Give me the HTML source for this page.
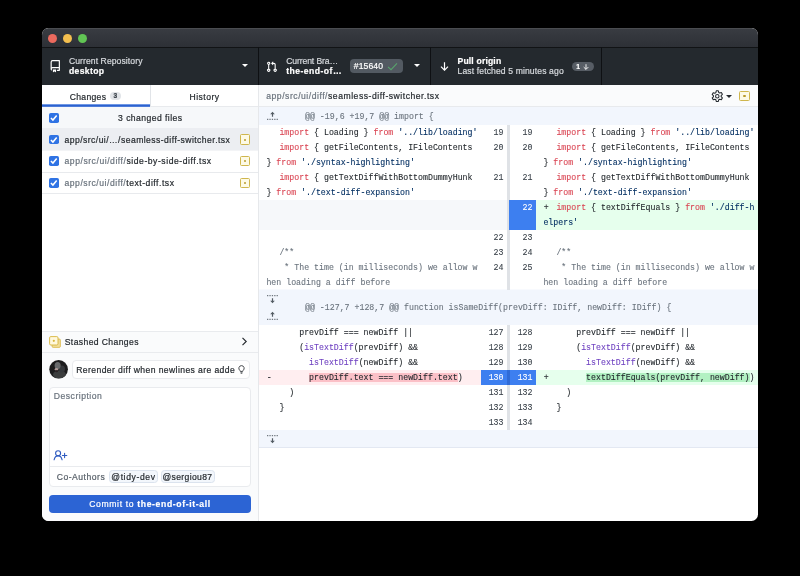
<!DOCTYPE html>
<html lang="en"><head>
<meta charset="utf-8">
<title>GitHub Desktop</title>
<style>
*{box-sizing:border-box;margin:0;padding:0}
html,body{width:800px;height:576px;background:#000;overflow:hidden}
body{font-family:"Liberation Sans",sans-serif;font-size:8.6px;color:#24292e;position:relative}
.win{position:absolute;left:42px;top:28px;width:716px;height:493px;background:#fff;border-radius:6.5px;overflow:hidden}
.pg{will-change:transform;position:absolute;left:-42px;top:-28px;width:800px;height:576px}
.r{position:absolute}
.tx{-webkit-text-stroke:0.2px;position:absolute;white-space:nowrap;line-height:10px}
.mono{-webkit-text-stroke:0.1px;position:absolute;white-space:pre;font-family:"Liberation Mono",monospace;font-size:8.25px;line-height:15px}
.cl{-webkit-text-stroke:0.1px;position:absolute;font-family:"Liberation Mono",monospace;font-size:8.25px;line-height:15px;white-space:pre;padding-left:7.4px;color:#24292e;overflow:hidden}
.mk{display:inline-block;width:13px;padding-left:0.4px}
.ln{-webkit-text-stroke:0.1px;position:absolute;width:26px;font-family:"Liberation Mono",monospace;font-size:8.25px;line-height:15px;text-align:right;padding-right:3.5px;color:#3a424a}
.ln.sel{background:#3d7ff0;color:#fff}
.ln.selr{margin-left:-1.5px;width:27.5px}
.k{color:#da4553}.s{color:#032f62}.f{color:#6f42c1}.c{color:#6a737d}
.hr{background:#fbc0c7}.hg{background:#b2f1c2}
</style>
</head>
<body>
<div class="win"><div class="pg">
<div class="r" style="left:42px;top:28px;width:716px;height:19px;background:linear-gradient(#393c42,#2d3036);"></div>
<div class="r" style="left:42px;top:28px;width:716px;height:1px;background:#4a4c50;"></div>
<div class="r" style="left:47.65px;top:34px;width:9.2px;height:9.2px;background:#ec6a5e;border-radius:50%"></div>
<div class="r" style="left:62.800000000000004px;top:34px;width:9.2px;height:9.2px;background:#f4bf4f;border-radius:50%"></div>
<div class="r" style="left:77.5px;top:34px;width:9.2px;height:9.2px;background:#61c554;border-radius:50%"></div>
<div class="r" style="left:42px;top:47px;width:716px;height:38px;background:#24292e;"></div>
<div class="r" style="left:42px;top:46.5px;width:716px;height:1px;background:#111315;"></div>
<div class="r" style="left:258px;top:47px;width:1px;height:38px;background:#0e1013;"></div>
<div class="r" style="left:430px;top:47px;width:1px;height:38px;background:#0e1013;"></div>
<div class="r" style="left:601px;top:47px;width:1px;height:38px;background:#0e1013;"></div>
<svg class="r" style="left:49px;top:60px" width="12.5" height="12.5" viewBox="0 0 16 16"><path fill="#fff" d="M2 2.500A2.500 2.500 0 0 1 4.500 0h8.750a.750.750 0 0 1 .750.750v12.500a.750.750 0 0 1-.750.750h-2.500a.750.750 0 0 1 0-1.500h1.750v-2h-8a1 1 0 0 0-.714 1.700.750.750 0 1 1-1.072 1.050A2.495 2.495 0 0 1 2 11.500Zm10.500-1h-8a1 1 0 0 0-1 1v6.708A2.486 2.486 0 0 1 4.500 9h8ZM5 12.250a.250.250 0 0 1 .250-.250h3.500a.250.250 0 0 1 .250.250v3.250a.250.250 0 0 1-.400.200l-1.450-1.087a.249.249 0 0 0-.300 0L5.400 15.700a.250.250 0 0 1-.400-.200Z"></path></svg>
<span class="tx" style="left: 68.9px; top: 55.62px; font-size: 8.6px; color: rgb(215, 218, 222); letter-spacing: 0.084px;">Current Repository</span>
<span class="tx" style="left: 68.9px; top: 65.92px; font-size: 8.6px; color: rgb(255, 255, 255); font-weight: bold; letter-spacing: 0.361px;">desktop</span>
<div class="r" style="left:242px;top:64.3px;width:0;height:0;border-left:3.0px solid transparent;border-right:3.0px solid transparent;border-top:3.5px solid #fff"></div>
<svg class="r" style="left:266px;top:60.5px" width="11.5" height="11.5" viewBox="0 0 16 16"><path fill="#fff" d="M1.500 3.250a2.250 2.250 0 1 1 3 2.122v5.256a2.251 2.251 0 1 1-1.500 0V5.372A2.250 2.250 0 0 1 1.500 3.250Zm5.677-.177L9.573.677A.250.250 0 0 1 10 .854V2.500h1A2.500 2.500 0 0 1 13.500 5v5.628a2.251 2.251 0 1 1-1.500 0V5a1 1 0 0 0-1-1h-1v1.646a.250.250 0 0 1-.427.177L7.177 3.427a.250.250 0 0 1 0-.354ZM3.750 2.500a.750.750 0 1 0 0 1.500.750.750 0 0 0 0-1.500Zm0 9.500a.750.750 0 1 0 0 1.500.750.750 0 0 0 0-1.500Zm8.250.750a.750.750 0 1 0 1.500 0 .750.750 0 0 0-1.500 0Z"></path></svg>
<span class="tx" style="left: 286.25px; top: 55.62px; font-size: 8.6px; color: rgb(215, 218, 222); letter-spacing: -0.11px;">Current Bra…</span>
<span class="tx" style="left: 286.25px; top: 65.92px; font-size: 8.6px; color: rgb(255, 255, 255); font-weight: bold; letter-spacing: 0.466px;">the-end-of…</span>
<div class="r" style="left:350px;top:59.3px;width:53px;height:13.7px;background:#535a62;border-radius:4px"></div>
<span class="tx" style="left: 353.75px; top: 61.22px; font-size: 8.6px; color: rgb(255, 255, 255); letter-spacing: 0.102px;">#15640</span>
<svg class="r" style="left:387px;top:61.5px" width="11" height="9" viewBox="0 0 11 9"><path d="M1 4.800 4 7.700 10 1.300" fill="none" stroke="#58a46c" stroke-width="1.050"></path></svg>
<div class="r" style="left:413.8px;top:64.3px;width:0;height:0;border-left:3.0px solid transparent;border-right:3.0px solid transparent;border-top:3.5px solid #fff"></div>
<svg class="r" style="left:440px;top:61.5px" width="9" height="9" viewBox="0 0 9 9"><path d="M4.500 0.300V8M1 4.700 4.500 8.200 8 4.700" fill="none" stroke="#fff" stroke-width="1.200"></path></svg>
<span class="tx" style="left: 457.5px; top: 55.62px; font-size: 8.6px; color: rgb(255, 255, 255); font-weight: bold; letter-spacing: 0.165px;">Pull origin</span>
<span class="tx" style="left: 457.5px; top: 65.92px; font-size: 8.6px; color: rgb(215, 218, 222); letter-spacing: 0.119px;">Last fetched 5 minutes ago</span>
<div class="r" style="left:572px;top:61.8px;width:22.3px;height:9.5px;background:#575d65;border-radius:5px"></div>
<span class="tx" style="left:576.30px;top:61.74px;font-size:6.8px;color:#fff;font-weight:bold;">1</span>
<svg class="r" style="left:582.8px;top:63.7px" width="6" height="6" viewBox="0 0 6 6"><path d="M3 0.200V5.300M0.700 3.100 3 5.400 5.300 3.100" fill="none" stroke="#fff" stroke-width="0.900"></path></svg>
<div class="r" style="left:42px;top:85px;width:216px;height:436px;background:#fff;"></div>
<div class="r" style="left:258px;top:85px;width:1px;height:436px;background:#e6e8eb;"></div>
<div class="r" style="left:42px;top:106px;width:216px;height:1px;background:#e8eaed;"></div>
<div class="r" style="left:150px;top:85px;width:1px;height:21px;background:#e1e4e8;"></div>
<div class="r" style="left:42px;top:104px;width:108px;height:1px;background:#6f97e4;"></div>
<div class="r" style="left:42px;top:105px;width:108px;height:1px;background:#2b62cf;"></div>
<div class="r" style="left:42px;top:106px;width:108px;height:1px;background:#4d7bd8;"></div>
<span class="tx" style="left: 69.75px; top: 91.62px; font-size: 8.6px; color: rgb(36, 41, 46); letter-spacing: 0.307px;">Changes</span>
<div class="r" style="left:110.2px;top:92.4px;width:10.6px;height:7.8px;background:#e1e4e8;border-radius:4px"></div>
<span class="tx" style="left:113.60px;top:91.31px;font-size:6.6px;color:#3a424a;font-weight:bold;">3</span>
<span class="tx" style="left: 189.5px; top: 91.62px; font-size: 8.6px; color: rgb(36, 41, 46); letter-spacing: 0.462px;">History</span>
<div class="r" style="left:42px;top:107px;width:216px;height:21px;background:#f6f8fa;"></div>
<div class="r" style="left:42px;top:128px;width:216px;height:0px;background:#e1e4e8;"></div>
<div class="r" style="left:49.2px;top:113.2px;width:9.6px;height:9.6px;background:#2f73e4;border-radius:1.800px"></div>
<svg class="r" style="left:49.2px;top:113.2px" width="9.6" height="9.6" viewBox="0 0 10 10"><path d="M2 5.200 4.100 7.300 8 2.700" fill="none" stroke="#fff" stroke-width="1.600"></path></svg>
<span class="tx" style="left: 118.1px; top: 113.32px; font-size: 8.6px; color: rgb(36, 41, 46); letter-spacing: 0.434px;">3 changed files</span>
<div class="r" style="left:42px;top:150px;width:216px;height:1px;background:#f3f4f6;"></div>
<div class="r" style="left:42px;top:171.5px;width:216px;height:1px;background:#e8eaed;"></div>
<div class="r" style="left:42px;top:193px;width:216px;height:1px;background:#e8eaed;"></div>
<div class="r" style="left:42px;top:128px;width:216px;height:22px;background:#eceef2;"></div>
<div class="r" style="left:49.2px;top:134.8px;width:9.6px;height:9.6px;background:#2f73e4;border-radius:1.800px"></div>
<svg class="r" style="left:49.2px;top:134.8px" width="9.6" height="9.6" viewBox="0 0 10 10"><path d="M2 5.200 4.100 7.300 8 2.700" fill="none" stroke="#fff" stroke-width="1.600"></path></svg>
<span class="tx" style="left: 64.5px; top: 134.57px; font-size: 8.6px; color: rgb(36, 41, 46); letter-spacing: 0.447px;">app/src/ui/…/seamless-diff-switcher.tsx</span>
<div class="r" style="left:239.6px;top:134.3px;width:10.600px;height:10.600px;border:1px solid #cfb64d;border-radius:1.500px;background:#fdfae6"></div>
<div class="r" style="left:243.79999999999998px;top:138.5px;width:2.2px;height:2.2px;background:#b99a2c;border-radius:50%"></div>
<div class="r" style="left:49.2px;top:156.4px;width:9.6px;height:9.6px;background:#2f73e4;border-radius:1.800px"></div>
<svg class="r" style="left:49.2px;top:156.4px" width="9.6" height="9.6" viewBox="0 0 10 10"><path d="M2 5.200 4.100 7.300 8 2.700" fill="none" stroke="#fff" stroke-width="1.600"></path></svg>
<span class="tx" style="left: 64.5px; top: 156.17px; font-size: 8.6px; color: rgb(36, 41, 46); letter-spacing: 0.539px;"><span style="color:#6a737d">app/src/ui/diff/</span>side-by-side-diff.tsx</span>
<div class="r" style="left:239.6px;top:155.9px;width:10.600px;height:10.600px;border:1px solid #cfb64d;border-radius:1.500px;background:#fdfae6"></div>
<div class="r" style="left:243.79999999999998px;top:160.1px;width:2.2px;height:2.2px;background:#b99a2c;border-radius:50%"></div>
<div class="r" style="left:49.2px;top:178.0px;width:9.6px;height:9.6px;background:#2f73e4;border-radius:1.800px"></div>
<svg class="r" style="left:49.2px;top:178.0px" width="9.6" height="9.6" viewBox="0 0 10 10"><path d="M2 5.200 4.100 7.300 8 2.700" fill="none" stroke="#fff" stroke-width="1.600"></path></svg>
<span class="tx" style="left: 64.5px; top: 177.77px; font-size: 8.6px; color: rgb(36, 41, 46); letter-spacing: 0.525px;"><span style="color:#6a737d">app/src/ui/diff/</span>text-diff.tsx</span>
<div class="r" style="left:239.6px;top:177.5px;width:10.600px;height:10.600px;border:1px solid #cfb64d;border-radius:1.500px;background:#fdfae6"></div>
<div class="r" style="left:243.79999999999998px;top:181.7px;width:2.2px;height:2.2px;background:#b99a2c;border-radius:50%"></div>
<div class="r" style="left:42px;top:331px;width:216px;height:190px;background:#fafbfc;"></div>
<div class="r" style="left:42px;top:331px;width:216px;height:1px;background:#e9ebee;"></div>
<div class="r" style="left:42px;top:352px;width:216px;height:1px;background:#e9ebee;"></div>
<svg class="r" style="left:48.5px;top:336px" width="12" height="12" viewBox="0 0 12 12"><rect x="3" y="3" width="8.400" height="8.400" rx="1.200" fill="#f1dd9a" stroke="#dbb94a" stroke-width="0.800"></rect><rect x="0.600" y="0.600" width="8.400" height="8.400" rx="1.200" fill="#fff8dc" stroke="#d6b43a" stroke-width="0.900"></rect><circle cx="4.800" cy="4.800" r="1.100" fill="#d6b43a"></circle></svg>
<span class="tx" style="left: 64.75px; top: 337.22px; font-size: 8.6px; color: rgb(36, 41, 46); letter-spacing: 0.384px;">Stashed Changes</span>
<svg class="r" style="left:241px;top:337.4px" width="7" height="9" viewBox="0 0 7 9"><path d="M1.500 0.800 5.200 4.500 1.500 8.200" fill="none" stroke="#24292e" stroke-width="1.150"></path></svg>
<svg class="r" style="left:49px;top:360px" width="19" height="19" viewBox="0 0 19 19"><defs><clipPath id="avc"><circle cx="9.600" cy="9.300" r="9.300"></circle></clipPath><filter id="avb" x="-50%" y="-50%" width="200%" height="200%"><feGaussianBlur stdDeviation="0.700"></feGaussianBlur></filter></defs><g clip-path="url(#avc)"><rect width="19" height="19" fill="#1c1c1d"></rect><g filter="url(#avb)"><ellipse cx="10.500" cy="14.500" rx="6.500" ry="4" fill="#3b3d3e"></ellipse><ellipse cx="13" cy="9" rx="3" ry="3.500" fill="#35373a"></ellipse><ellipse cx="8.600" cy="5.600" rx="3" ry="3.600" fill="#686b6c"></ellipse><ellipse cx="7.400" cy="9.200" rx="1.700" ry="1.200" fill="#b09a98"></ellipse><ellipse cx="7.600" cy="11.200" rx="1.500" ry="1" fill="#2a2223"></ellipse></g></g></svg>
<div class="r" style="left:72px;top:360.400px;width:178px;height:18.200px;border:1px solid #e9ebee;border-radius:4px;background:#fff"></div>
<span class="tx" style="left: 76.25px; top: 365.12px; font-size: 8.6px; color: rgb(36, 41, 46); letter-spacing: 0.397px;">Rerender diff when newlines are adde</span>
<svg class="r" style="left:238.3px;top:364.9px" width="7" height="9.6" viewBox="0 0 8 11"><path d="M4 0.700a3.100 3.100 0 0 0-1.900 5.500c.4.350.6.700.6 1.200h2.600c0-.5.200-.850.600-1.200A3.100 3.100 0 0 0 4 .700ZM2.800 9h2.400M3.300 10.300h1.400" fill="none" stroke="#24292e" stroke-width="0.950"></path></svg>
<div class="r" style="left:49px;top:387.200px;width:201.500px;height:99.800px;border:1px solid #e9ebee;border-radius:4px;background:#fff"></div>
<span class="tx" style="left: 53.8px; top: 391.32px; font-size: 8.6px; color: rgb(106, 115, 125); letter-spacing: 0.505px;">Description</span>
<svg class="r" style="left:52px;top:449px" width="16" height="13" viewBox="52 449 16 13"><g fill="none" stroke="#2f5bc0" stroke-width="1.100" stroke-linecap="round"><circle cx="58.100" cy="453.300" r="2.500"></circle><path d="M54.100 459.800c.5-2.300 1.900-3.900 4-3.900s3.500 1.600 4 3.900"></path><path d="M64.600 453.400v4.200M62.400 455.500h4.400"></path></g></svg>
<div class="r" style="left:50px;top:466px;width:200px;height:1px;background:#e9ebee;"></div>
<span class="tx" style="left: 56.7px; top: 471.82px; font-size: 8.6px; color: rgb(88, 96, 105); letter-spacing: 0.509px;">Co-Authors</span>
<div class="r" style="left:109.300px;top:470px;width:48.300px;height:13px;border:1px solid #dbe3ee;border-radius:3.500px;background:#f3f7fc"></div>
<span class="tx" style="left: 111.3px; top: 471.82px; font-size: 8.6px; color: rgb(36, 41, 46); letter-spacing: 0.608px;">@tidy-dev</span>
<div class="r" style="left:160.500px;top:470px;width:54.300px;height:13px;border:1px solid #dbe3ee;border-radius:3.500px;background:#f3f7fc"></div>
<span class="tx" style="left: 162.5px; top: 471.82px; font-size: 8.6px; color: rgb(36, 41, 46); letter-spacing: 0.34px;">@sergiou87</span>
<div class="r" style="left:49px;top:495px;width:201.5px;height:18px;background:#2c64d4;border-radius:4px"></div>
<span class="tx" style="left: 89.2px; top: 498.82px; font-size: 8.6px; color: rgb(255, 255, 255); letter-spacing: 0.649px;">Commit to <b>the-end-of-it-all</b></span>
<div class="r" style="left:259px;top:85px;width:499px;height:21.5px;background:#fafbfc;"></div>
<div class="r" style="left:259px;top:106px;width:499px;height:1px;background:#e8eaed;"></div>
<span class="tx" style="left: 266.25px; top: 91.27px; font-size: 8.6px; color: rgb(36, 41, 46); letter-spacing: 0.528px;"><span style="color:#6a737d">app/src/ui/diff/</span>seamless-diff-switcher.tsx</span>
<svg class="r" style="left:711px;top:89.8px" width="12.6" height="12.6" viewBox="0 0 16 16"><path fill="none" stroke="#24292e" stroke-width="1.350" stroke-linejoin="round" d="M6.700 1h2.600l.5 2.100 1.300.75 2.050-.6 1.300 2.250-1.550 1.500v1.500l1.550 1.500-1.300 2.250-2.050-.6-1.300.75-.5 2.100H6.700l-.5-2.100-1.300-.75-2.050.6-1.300-2.250L3.100 8.750v-1.500L1.550 5.750l1.300-2.250 2.050.6 1.300-.75Z"></path><circle cx="8" cy="8" r="2.200" fill="none" stroke="#24292e" stroke-width="1.350"></circle></svg>
<div class="r" style="left:726.4px;top:94.8px;width:0;height:0;border-left:3.0px solid transparent;border-right:3.0px solid transparent;border-top:3.2px solid #24292e"></div>
<div class="r" style="left:739.2px;top:90.7px;width:10.600px;height:10.600px;border:1px solid #cfb64d;border-radius:1.500px;background:#fdfae6"></div>
<div class="r" style="left:743.4000000000001px;top:94.9px;width:2.2px;height:2.2px;background:#b99a2c;border-radius:50%"></div>
<div class="r" style="left:259px;top:107px;width:499px;height:18px;background:#f2f6fd;"></div>
<span class="mono" style="left:305px;top:108.5px;color:#6a737d">@@ -19,6 +19,7 @@ import {</span>
<svg class="r" style="left:266.5px;top:111.2px" width="11" height="9" viewBox="0 0 11 9"><path d="M5.500 0.800 7.800 3.300H6.100V5.700H4.900V3.300H3.200Z" fill="#535b63"></path><path d="M0 8.300h11" stroke="#535b63" stroke-width="1" stroke-dasharray="1.300 1.100"></path></svg>
<div class="r" style="left:259px;top:125px;width:499px;height:0px;background:#e5eefa;"></div>
<div class="r" style="left:259px;top:289px;width:499px;height:1px;background:#f8fafe;"></div>
<div class="r" style="left:259px;top:290px;width:499px;height:35px;background:#f2f6fd;"></div>
<span class="mono" style="left:305px;top:300.0px;color:#6a737d">@@ -127,7 +128,7 @@ function isSameDiff(prevDiff: IDiff, newDiff: IDiff) {</span>
<svg class="r" style="left:266.5px;top:294.5px" width="11" height="9" viewBox="0 0 11 9"><path d="M0 0.700h11" stroke="#535b63" stroke-width="1" stroke-dasharray="1.300 1.100"></path><path d="M5.500 8.200 7.800 5.700H6.100V3.300H4.900V5.700H3.200Z" fill="#535b63"></path></svg>
<svg class="r" style="left:266.5px;top:311px" width="11" height="9" viewBox="0 0 11 9"><path d="M5.500 0.800 7.800 3.300H6.100V5.700H4.900V3.300H3.200Z" fill="#535b63"></path><path d="M0 8.300h11" stroke="#535b63" stroke-width="1" stroke-dasharray="1.300 1.100"></path></svg>
<div class="r" style="left:259px;top:430px;width:499px;height:16.5px;background:#f2f6fd;"></div>
<svg class="r" style="left:266.5px;top:434.5px" width="11" height="9" viewBox="0 0 11 9"><path d="M0 0.700h11" stroke="#535b63" stroke-width="1" stroke-dasharray="1.300 1.100"></path><path d="M5.500 8.200 7.800 5.700H6.100V3.300H4.900V5.700H3.200Z" fill="#535b63"></path></svg>
<div class="r" style="left:259px;top:446.5px;width:499px;height:1px;background:#e3e8f2;"></div>
<div class="r" style="left:507px;top:125px;width:3px;height:165px;background:#dfe2e6;"></div>
<div class="r" style="left:507px;top:325px;width:3px;height:105px;background:#dfe2e6;"></div>
<div class="cl" style="left:259px;top:125px;width:222px;height:15px;"><span class="mk"></span><span class="k">import</span> { Loading } <span class="k">from</span> <span class="s">'../lib/loading'</span></div>
<div class="ln" style="left:481px;top:125px;height:15px;">19</div>
<div class="cl" style="left:536px;top:125px;width:222px;height:15px;"><span class="mk"></span><span class="k">import</span> { Loading } <span class="k">from</span> <span class="s">'../lib/loading'</span></div>
<div class="ln" style="left:510px;top:125px;height:15px;">19</div>
<div class="cl" style="left:259px;top:140px;width:222px;height:15px;"><span class="mk"></span><span class="k">import</span> { getFileContents, IFileContents</div>
<div class="ln" style="left:481px;top:140px;height:15px;">20</div>
<div class="cl" style="left:536px;top:140px;width:222px;height:15px;"><span class="mk"></span><span class="k">import</span> { getFileContents, IFileContents</div>
<div class="ln" style="left:510px;top:140px;height:15px;">20</div>
<div class="cl" style="left:259px;top:155px;width:222px;height:15px;">} <span class="k">from</span> <span class="s">'./syntax-highlighting'</span></div>
<div class="cl" style="left:536px;top:155px;width:222px;height:15px;">} <span class="k">from</span> <span class="s">'./syntax-highlighting'</span></div>
<div class="cl" style="left:259px;top:170px;width:222px;height:15px;"><span class="mk"></span><span class="k">import</span> { getTextDiffWithBottomDummyHunk</div>
<div class="ln" style="left:481px;top:170px;height:15px;">21</div>
<div class="cl" style="left:536px;top:170px;width:222px;height:15px;"><span class="mk"></span><span class="k">import</span> { getTextDiffWithBottomDummyHunk</div>
<div class="ln" style="left:510px;top:170px;height:15px;">21</div>
<div class="cl" style="left:259px;top:185px;width:222px;height:15px;">} <span class="k">from</span> <span class="s">'./text-diff-expansion'</span></div>
<div class="cl" style="left:536px;top:185px;width:222px;height:15px;">} <span class="k">from</span> <span class="s">'./text-diff-expansion'</span></div>
<div class="r" style="left:259px;top:200px;width:248px;height:30px;background:#f6f8fa;"></div>
<div class="cl" style="left:536px;top:200px;width:222px;height:15px;background:#e6ffed;"><span class="mk">+</span><span class="k">import</span> { textDiffEquals } <span class="k">from</span> <span class="s">'./diff-h</span></div>
<div class="ln sel selr" style="left:510px;top:200px;height:30px;">22</div>
<div class="cl" style="left:536px;top:215px;width:222px;height:15px;background:#e6ffed;"><span class="s">elpers'</span></div>
<div class="cl" style="left:259px;top:230px;width:222px;height:15px;"><span class="mk"></span></div>
<div class="ln" style="left:481px;top:230px;height:15px;">22</div>
<div class="cl" style="left:536px;top:230px;width:222px;height:15px;"><span class="mk"></span></div>
<div class="ln" style="left:510px;top:230px;height:15px;">23</div>
<div class="cl" style="left:259px;top:245px;width:222px;height:15px;"><span class="mk"></span><span class="c">/**</span></div>
<div class="ln" style="left:481px;top:245px;height:15px;">23</div>
<div class="cl" style="left:536px;top:245px;width:222px;height:15px;"><span class="mk"></span><span class="c">/**</span></div>
<div class="ln" style="left:510px;top:245px;height:15px;">24</div>
<div class="cl" style="left:259px;top:260px;width:222px;height:15px;"><span class="mk"></span><span class="c"> * The time (in milliseconds) we allow w</span></div>
<div class="ln" style="left:481px;top:260px;height:15px;">24</div>
<div class="cl" style="left:536px;top:260px;width:222px;height:15px;"><span class="mk"></span><span class="c"> * The time (in milliseconds) we allow w</span></div>
<div class="ln" style="left:510px;top:260px;height:15px;">25</div>
<div class="cl" style="left:259px;top:275px;width:222px;height:15px;"><span class="c">hen loading a diff before</span></div>
<div class="cl" style="left:536px;top:275px;width:222px;height:15px;"><span class="c">hen loading a diff before</span></div>
<div class="cl" style="left:259px;top:325px;width:222px;height:15px;"><span class="mk"></span>    prevDiff === newDiff ||</div>
<div class="ln" style="left:481px;top:325px;height:15px;">127</div>
<div class="cl" style="left:536px;top:325px;width:222px;height:15px;"><span class="mk"></span>    prevDiff === newDiff ||</div>
<div class="ln" style="left:510px;top:325px;height:15px;">128</div>
<div class="cl" style="left:259px;top:340px;width:222px;height:15px;"><span class="mk"></span>    (<span class="f">isTextDiff</span>(prevDiff) &amp;&amp;</div>
<div class="ln" style="left:481px;top:340px;height:15px;">128</div>
<div class="cl" style="left:536px;top:340px;width:222px;height:15px;"><span class="mk"></span>    (<span class="f">isTextDiff</span>(prevDiff) &amp;&amp;</div>
<div class="ln" style="left:510px;top:340px;height:15px;">129</div>
<div class="cl" style="left:259px;top:355px;width:222px;height:15px;"><span class="mk"></span>      <span class="f">isTextDiff</span>(newDiff) &amp;&amp;</div>
<div class="ln" style="left:481px;top:355px;height:15px;">129</div>
<div class="cl" style="left:536px;top:355px;width:222px;height:15px;"><span class="mk"></span>      <span class="f">isTextDiff</span>(newDiff) &amp;&amp;</div>
<div class="ln" style="left:510px;top:355px;height:15px;">130</div>
<div class="cl" style="left:259px;top:370px;width:222px;height:15px;background:#ffeef0;"><span class="mk">-</span>      <span class="hr">prevDiff.text === newDiff.text</span>)</div>
<div class="ln sel" style="left:481px;top:370px;height:15px;">130</div>
<div class="cl" style="left:536px;top:370px;width:222px;height:15px;background:#e6ffed;"><span class="mk">+</span>      <span class="hg">textDiffEquals(prevDiff, newDiff)</span>)</div>
<div class="ln sel selr" style="left:510px;top:370px;height:15px;">131</div>
<div class="r" style="left:507px;top:370px;width:3px;height:15px;background:#2f6bd6;"></div>
<div class="cl" style="left:259px;top:385px;width:222px;height:15px;"><span class="mk"></span>  )</div>
<div class="ln" style="left:481px;top:385px;height:15px;">131</div>
<div class="cl" style="left:536px;top:385px;width:222px;height:15px;"><span class="mk"></span>  )</div>
<div class="ln" style="left:510px;top:385px;height:15px;">132</div>
<div class="cl" style="left:259px;top:400px;width:222px;height:15px;"><span class="mk"></span>}</div>
<div class="ln" style="left:481px;top:400px;height:15px;">132</div>
<div class="cl" style="left:536px;top:400px;width:222px;height:15px;"><span class="mk"></span>}</div>
<div class="ln" style="left:510px;top:400px;height:15px;">133</div>
<div class="cl" style="left:259px;top:415px;width:222px;height:15px;"><span class="mk"></span></div>
<div class="ln" style="left:481px;top:415px;height:15px;">133</div>
<div class="cl" style="left:536px;top:415px;width:222px;height:15px;"><span class="mk"></span></div>
<div class="ln" style="left:510px;top:415px;height:15px;">134</div>
</div></div>


</body></html>
